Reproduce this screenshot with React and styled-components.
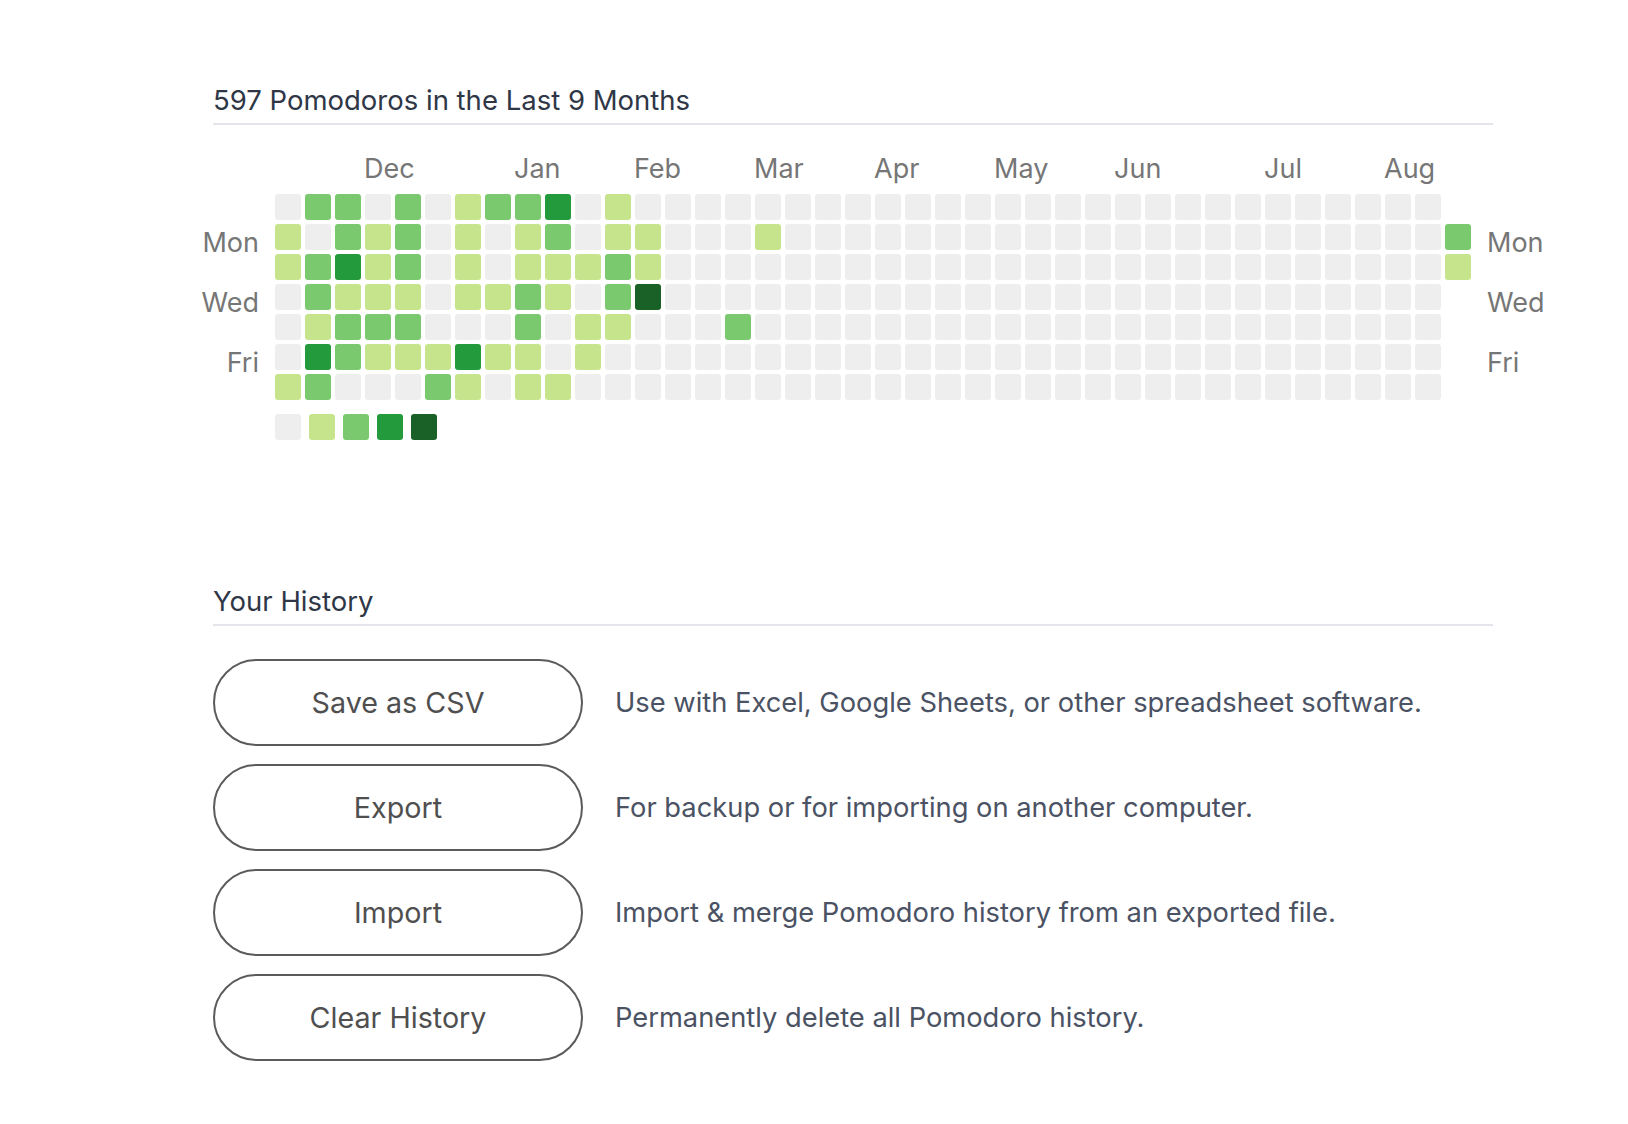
import React from 'react';
import styled, { createGlobalStyle } from 'styled-components';

const GlobalStyle = createGlobalStyle`
  body {
    margin: 0;
    background: #fff;
    font-family: Inter, "Noto Sans", "Liberation Sans", sans-serif;
  }
`;

const LEVEL_COLORS = ['#eeeeee', '#c6e48b', '#7bc96f', '#239a3b', '#196127'];

const WEEKS = 40;

const pad = (head, last) => head.padEnd(WEEKS - 1, '0') + last;

// one string per weekday (Sun..Sat), one char per week; '.' = no day
const ROWS = [
  pad('02202012230100', '.'),
  pad('10212010120110001', '2'),
  pad('12312010111210', '1'),
  pad('02111011210240', '.'),
  pad('0122200020110002', '.'),
  pad('03211131101000', '.'),
  pad('12000210110000', '.'),
];

const MONTHS = [
  { label: 'Dec', col: 3 },
  { label: 'Jan', col: 8 },
  { label: 'Feb', col: 12 },
  { label: 'Mar', col: 16 },
  { label: 'Apr', col: 20 },
  { label: 'May', col: 24 },
  { label: 'Jun', col: 28 },
  { label: 'Jul', col: 33 },
  { label: 'Aug', col: 37 },
];

const DAY_LABELS = ['', 'Mon', '', 'Wed', '', 'Fri', ''];

const ACTIONS = [
  { label: 'Save as CSV', text: 'Use with Excel, Google Sheets, or other spreadsheet software.' },
  { label: 'Export', text: 'For backup or for importing on another computer.' },
  { label: 'Import', text: 'Import & merge Pomodoro history from an exported file.' },
  { label: 'Clear History', text: 'Permanently delete all Pomodoro history.' },
];

const Page = styled('div')`
  width: 1280px;
  padding: 82px 0 60px 213px;
`;

const Section = styled('section')`
  & + & {
    margin-top: 143px;
  }
`;

const Heading = styled('h2')`
  margin: 0;
  padding-bottom: 5px;
  border-bottom: 2px solid #e4e5ea;
  font-size: 27.5px;
  line-height: 36px;
  font-weight: 400;
  color: #2f3747;
`;

const Heatmap = styled('div')`
  display: flex;
  align-items: flex-start;
  margin-top: 29px;
`;

const DayColumn = styled('div')`
  flex: none;
  width: 46px;
  display: flex;
  flex-direction: column;
  gap: 4px;
  align-items: ${(p) => (p.$side === 'left' ? 'flex-end' : 'flex-start')};
  padding-top: 46px;
  margin: ${(p) => (p.$side === 'left' ? '0 16px 0 0' : '0 0 0 12px')};
`;

const Label = styled('span')`
  height: 26px;
  font-size: 27px;
  line-height: 26px;
  color: #767676;
  white-space: nowrap;
`;

const Chart = styled('div')`
  display: flex;
  flex-direction: column;
`;

const MonthRow = styled('div')`
  display: grid;
  grid-template-columns: repeat(${WEEKS}, 26px);
  column-gap: 4px;
  height: 26px;
  padding-top: 2px;
  margin-bottom: 12px;
`;

const MonthLabel = styled(Label)`
  grid-column: ${(p) => p.$col + 1} / span 4;
  grid-row: 1;
  margin-left: -1px;
`;

const CellGrid = styled('div')`
  display: grid;
  grid-template-rows: repeat(7, 26px);
  grid-auto-columns: 26px;
  grid-auto-flow: column;
  gap: 4px;
`;

const Cell = styled('div')`
  width: 26px;
  height: 26px;
  border-radius: 3px;
  background: ${(p) => (p.$level === null ? 'transparent' : LEVEL_COLORS[p.$level])};
`;

const Legend = styled('div')`
  display: flex;
  gap: 8px;
  margin-top: 14px;
`;

const ActionList = styled('div')`
  display: flex;
  flex-direction: column;
  gap: 18px;
  margin-top: 33px;
`;

const ActionRow = styled('div')`
  display: flex;
  align-items: center;
  gap: 32px;
`;

const PillButton = styled('button')`
  flex: none;
  width: 370px;
  height: 87px;
  border: 2px solid #5b5b5b;
  border-radius: 44px;
  background: #fff;
  font-family: inherit;
  font-size: 28.7px;
  color: #4f4f4f;
  cursor: pointer;
`;

const Description = styled('p')`
  margin: 0;
  font-size: 27.3px;
  color: #4a5263;
`;

const weeks = Array.from({ length: WEEKS }, (_, col) =>
  ROWS.map((row) => (row[col] === '.' ? null : Number(row[col])))
);

const App = () => (
  <Page>
    <GlobalStyle />
    <Section>
      <Heading>597 Pomodoros in the Last 9 Months</Heading>
      <Heatmap>
        <DayColumn $side="left">
          {DAY_LABELS.map((d, i) => <Label key={i}>{d}</Label>)}
        </DayColumn>
        <Chart>
          <MonthRow>
            {MONTHS.map((m) => (
              <MonthLabel key={m.label} $col={m.col}>{m.label}</MonthLabel>
            ))}
          </MonthRow>
          <CellGrid>
            {weeks.map((days, c) =>
              days.map((level, r) => <Cell key={`${c}-${r}`} $level={level} />)
            )}
          </CellGrid>
          <Legend>
            {[0, 1, 2, 3, 4].map((l) => <Cell key={l} $level={l} />)}
          </Legend>
        </Chart>
        <DayColumn $side="right">
          {DAY_LABELS.map((d, i) => <Label key={i}>{d}</Label>)}
        </DayColumn>
      </Heatmap>
    </Section>
    <Section>
      <Heading>Your History</Heading>
      <ActionList>
        {ACTIONS.map((a) => (
          <ActionRow key={a.label}>
            <PillButton>{a.label}</PillButton>
            <Description>{a.text}</Description>
          </ActionRow>
        ))}
      </ActionList>
    </Section>
  </Page>
);

export default App;
